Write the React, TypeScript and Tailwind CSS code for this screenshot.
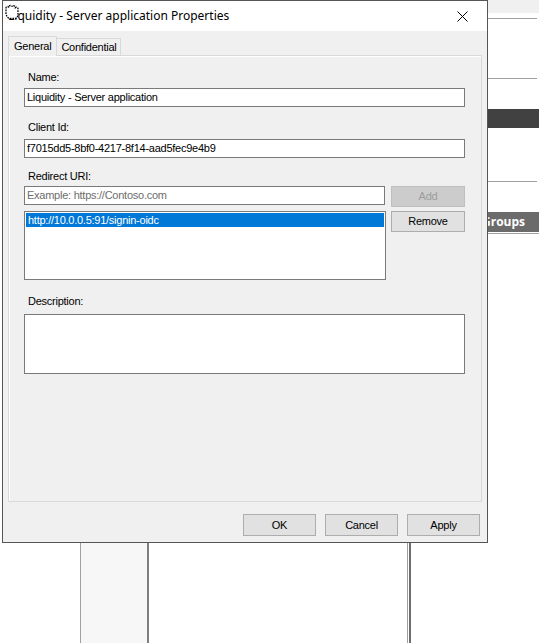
import React from "react";

const font = { fontFamily: '"Noto Sans", "Liberation Sans", sans-serif' };
// WinForms controls use the narrow 8.25pt sans face
const formFont = { fontFamily: '"Liberation Sans", Arial, sans-serif', letterSpacing: "-0.25px" };

// Classic WinForms push button
const WinButton = ({ label, disabled = false, className = "" }: { label: string; disabled?: boolean; className?: string }) => (
  <div
    style={formFont}
    className={`flex items-center justify-center border text-[11px] leading-none ${
      disabled ? "bg-[#cccccc] border-[#bfbfbf] text-[#9d9d9d]" : "bg-[#e1e1e1] border-[#adadad] text-black"
    } ${className}`}
  >
    {label}
  </div>
);

const Field = ({ value, className = "", muted = false }: { value: string; className?: string; muted?: boolean }) => (
  <div
    style={formFont}
    className={`h-[19px] border border-[#7a7a7a] bg-white px-[2px] flex items-center text-[11px] whitespace-nowrap overflow-hidden ${
      muted ? "text-[#6d6d6d]" : "text-black"
    } ${className}`}
  >
    {value}
  </div>
);

const Label = ({ text, className = "" }: { text: string; className?: string }) => (
  <div style={formFont} className={`h-[15px] leading-[15px] text-[11px] text-black pl-[4px] ${className}`}>
    {text}
  </div>
);

// Grab-hand cursor sitting over the title icon
const HandCursor = () => (
  <svg width="18" height="18" viewBox="0 0 18 18" className="block">
    <path
      d="M3 8 L3 5 Q3 3.5 4.5 3.5 Q5.5 3.5 5.8 4.5 Q6 2.5 7.5 2.5 Q9 2.5 9.2 3.8 Q9.6 2.6 11 2.8 Q12.4 3 12.4 4.5 Q13 3.8 14 4.2 Q15 4.7 15 6 L15 11 Q15 14.5 12 15.5 L7 15.5 Q4 15 3 11 Z"
      fill="white"
      stroke="black"
      strokeWidth="1.3"
      strokeDasharray="1.6 1"
    />
  </svg>
);

const Background = () => (
  <div className="absolute inset-0 flex bg-white">
    <div className="w-[80px]" />
    <div className="w-[69px] h-full bg-[#f7f7f7] border-l border-[#a0a0a0] border-r-2 border-r-[#7f7f7f]" />
    <div className="w-[258px]" />
    <div className="w-[4px] h-full border-l border-[#a0a0a0] border-r-2 border-r-[#6e6e6e]" />
    <div className="w-[77px]" />
    <div className="flex-1 flex flex-col">
      <div className="h-[13px] bg-[#f0f0f0]" />
      <div className="h-[5px]" />
      <div className="h-px bg-[#a0a0a0] mr-[2px]" />
      <div className="h-[59px]" />
      <div className="h-px bg-[#a0a0a0] mr-[2px]" />
      <div className="h-[30px]" />
      <div className="h-[19px] bg-[#414141]" />
      <div className="h-[53px]" />
      <div className="h-px bg-[#a0a0a0] mr-[2px]" />
      <div className="h-[30px]" />
      <div
        className="h-[20px] bg-[#6b6b6b] text-white font-bold text-[12px] leading-[20px] whitespace-nowrap overflow-hidden"
        style={{ fontFamily: '"Open Sans", "Noto Sans", sans-serif' }}
      >
        <span className="-ml-[6px]">Groups</span>
      </div>
      <div className="h-px bg-[#a0a0a0] mt-[1px]" />
    </div>
  </div>
);

export default function App() {
  return (
    <div className="relative w-[539px] h-[643px] overflow-hidden bg-white" style={font}>
      <Background />

      <div className="absolute left-[2px] top-0 w-[486px] h-[543px] border border-[#555555] bg-[#f0f0f0] flex flex-col">
        {/* title bar */}
        <div className="h-[30px] bg-white flex items-center relative">
          <div className="absolute left-0 top-[2px]">
            <HandCursor />
          </div>
          <span className="pl-[5px] text-[12px] text-black">Liquidity - Server application Properties</span>
          <svg width="11" height="11" viewBox="0 0 11 11" className="ml-auto mr-[19px]">
            <path d="M0.5 0.5 L10.5 10.5 M10.5 0.5 L0.5 10.5" stroke="black" strokeWidth="1" />
          </svg>
        </div>

        {/* tabs */}
        <div className="flex items-end pl-[5px] pt-[4px] h-[24px]" style={formFont}>
          <div className="h-[20px] px-[5px] border border-b-0 border-[#d9d9d9] bg-[#f0f0f0] text-[11px] leading-[18px] relative z-10 -mb-px">
            General
          </div>
          <div className="h-[17px] px-[4px] border border-l-0 border-b-0 border-[#d9d9d9] bg-[#f0f0f0] text-[11px] leading-[16px]">
            Confidential
          </div>
        </div>

        {/* tab page */}
        <div className="ml-[5px] mr-[5px] h-[447px] border border-[#d9d9d9] shadow-[inset_1px_1px_0_#ffffff] bg-[#f0f0f0] pt-[14px] pl-[15px] pr-[16px]">
          <Label text="Name:" />
          <Field value="Liquidity - Server application" className="mt-[3px]" />

          <Label text="Client Id:" className="mt-[13px]" />
          <Field value="f7015dd5-8bf0-4217-8f14-aad5fec9e4b9" className="mt-[4px]" />

          <Label text="Redirect URI:" className="mt-[11px]" />
          <div className="flex items-start mt-[2px] h-[21px]">
            <Field value="Example: https://Contoso.com" muted className="w-[361px]" />
            <WinButton label="Add" disabled className="ml-auto w-[74px] h-[21px]" />
          </div>
          <div className="flex items-start mt-[4px]">
            <div className="w-[362px] h-[69px] border border-[#7a7a7a] bg-white p-px">
              <div
                style={formFont}
                className="h-[14px] bg-[#0078d7] text-white text-[11px] leading-[14px] pl-[2px]"
              >
                http://10.0.0.5:91/signin-oidc
              </div>
            </div>
            <WinButton label="Remove" className="ml-auto w-[74px] h-[21px]" />
          </div>

          <Label text="Description:" className="mt-[14px]" />
          <div className="mt-[5px] h-[60px] border border-[#7a7a7a] bg-white" />
        </div>

        {/* dialog buttons */}
        <div className="flex justify-end gap-[9px] pr-[7px] mt-[12px]">
          <WinButton label="OK" className="w-[73px] h-[22px]" />
          <WinButton label="Cancel" className="w-[73px] h-[22px]" />
          <WinButton label="Apply" className="w-[73px] h-[22px]" />
        </div>
      </div>
    </div>
  );
}
